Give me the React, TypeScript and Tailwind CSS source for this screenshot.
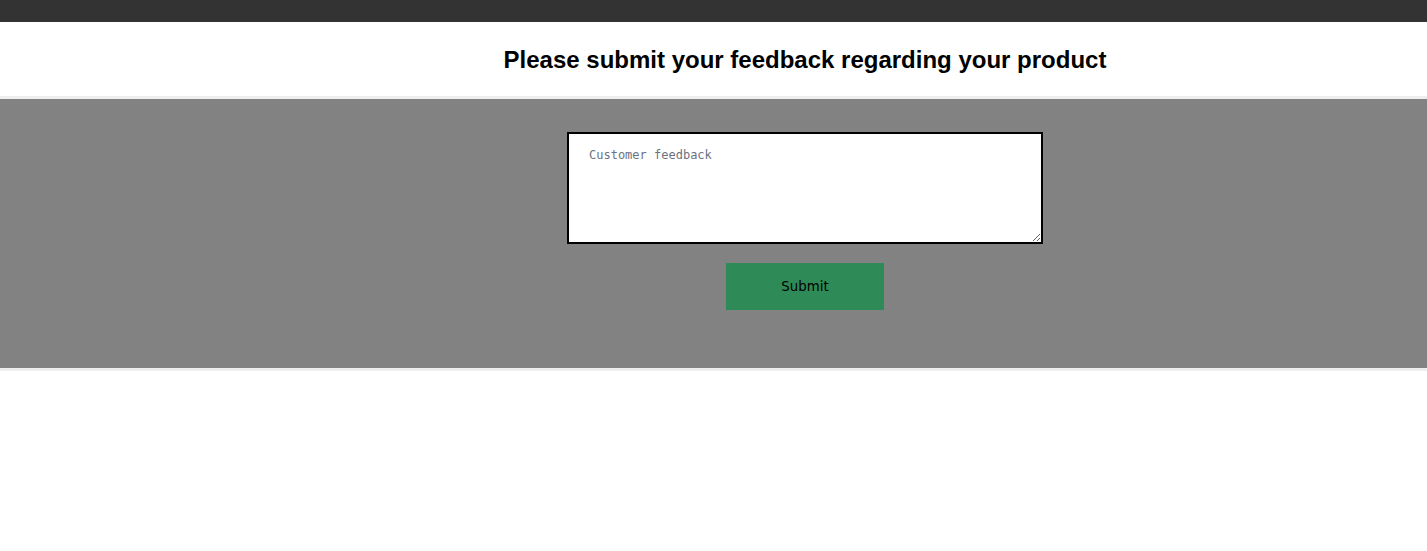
import React from "react";

export default function App() {
  return (
    <div className="min-h-[551px] bg-white">
      <div className="h-[22px] bg-[#333333]" />
      <div className="flex h-[74px] items-center justify-center pl-[183px] pt-[2px]">
        <h1 className="text-[24px] font-bold text-black [font-family:'Liberation_Sans',Arial,sans-serif]">
          Please submit your feedback regarding your product
        </h1>
      </div>
      <div className="border-y-[3px] border-[#eeeeee] bg-[#828282]">
        <div className="flex flex-col items-center pl-[183px] pt-[33px] pb-[58px]">
          <textarea
            placeholder="Customer feedback"
            className="block h-[112px] w-[476px] border-2 border-black bg-white px-5 pt-3 text-[12px] text-black placeholder:text-[#6b7280] [font-family:'DejaVu_Sans_Mono',monospace] outline-none"
          />
          <button className="mt-[19px] h-[47px] w-[158px] bg-[#2e8b57] text-[13.33px] text-black [font-family:'DejaVu_Sans',sans-serif]">
            Submit
          </button>
        </div>
      </div>
    </div>
  );
}
